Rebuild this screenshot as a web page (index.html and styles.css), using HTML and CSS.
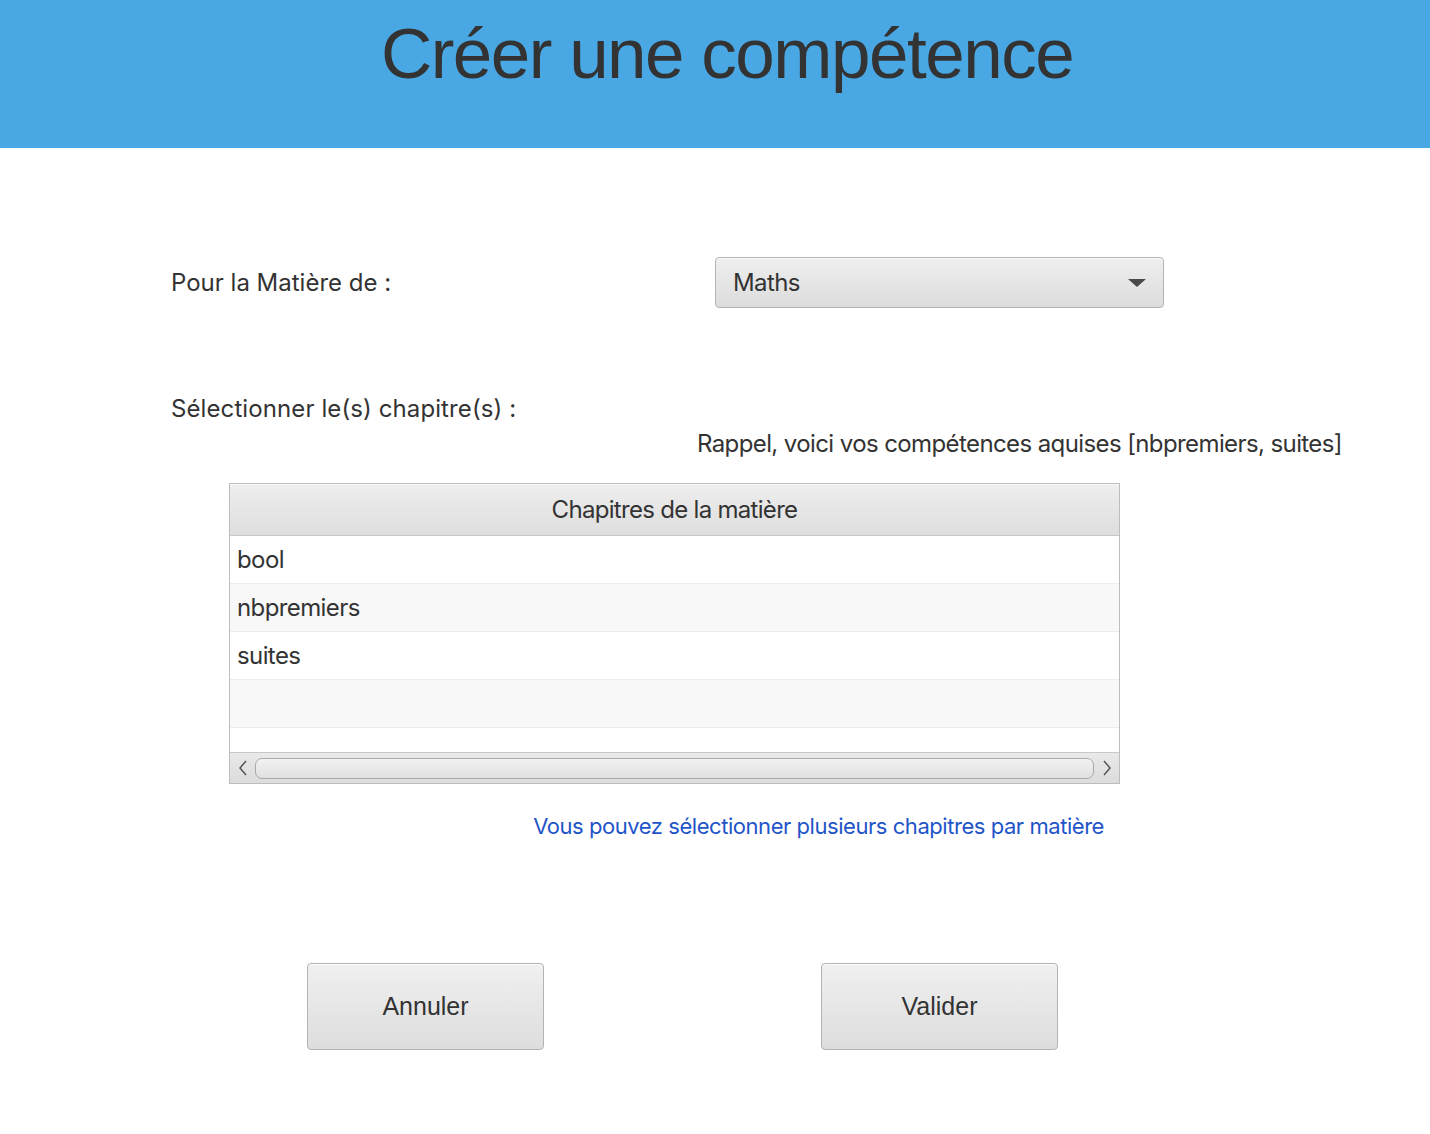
FILE: index.html
```html
<!DOCTYPE html>
<html lang="fr">
<head>
<meta charset="utf-8">
<link rel="stylesheet" href="styles.css">
</head>
<body>
<header class="banner"><h1 class="title">Créer une compétence</h1></header>
<main class="content">
  <div class="row-matiere">
    <span class="label">Pour la Matière de :</span>
    <div class="combo"><span class="combo-value">Maths</span><span class="combo-arrow"></span></div>
  </div>
  <div class="label label-chap">Sélectionner le(s) chapitre(s) :</div>
  <div class="rappel">Rappel, voici vos compétences aquises [nbpremiers, suites]</div>
  <div class="table">
    <div class="table-head">Chapitres de la matière</div>
    <div class="table-body">
      <div class="trow">bool</div>
      <div class="trow odd">nbpremiers</div>
      <div class="trow">suites</div>
      <div class="trow odd"></div>
      <div class="trow last"></div>
    </div>
    <div class="hscroll">
      <span class="sarrow left"><svg width="10" height="16" viewBox="0 0 10 16"><path d="M8 1 L2 8 L8 15" fill="none" stroke="#555" stroke-width="1.5"/></svg></span>
      <div class="sthumb"></div>
      <span class="sarrow right"><svg width="10" height="16" viewBox="0 0 10 16"><path d="M2 1 L8 8 L2 15" fill="none" stroke="#555" stroke-width="1.5"/></svg></span>
    </div>
  </div>
  <div class="note">Vous pouvez sélectionner plusieurs chapitres par matière</div>
  <div class="actions">
    <button class="btn">Annuler</button>
    <button class="btn">Valider</button>
  </div>
</main>
</body>
</html>
```
FILE: styles.css
```css
html, body { margin: 0; padding: 0; background: #fff; }
body { font-family: Inter, "Noto Sans", sans-serif; color: #333; width: 1430px; }
.banner { height: 148px; background: #49a7e4; display: flex; justify-content: center; padding-left: 24px; box-sizing: border-box; }
.title { margin: 0; padding-top: 12px; font-family: "Liberation Sans", Arial, sans-serif; font-weight: normal; font-size: 71px; line-height: 84px; color: #333; letter-spacing: -1.5px; }
.content { padding-left: 171px; }
.label { font-size: 24px; letter-spacing: 0; line-height: 30px; color: #333; }
.row-matiere { display: flex; align-items: center; margin-top: 109px; height: 51px; }
.row-matiere .label { width: 544px; }
.combo { border: 1px solid #b3b3b3; border-radius: 4px; background: linear-gradient(#efefef, #dcdcdc); box-shadow: inset 0 1px 0 #fbfbfb; display: flex; align-items: center; justify-content: space-between; padding: 0 17px; box-sizing: border-box; width: 449px; height: 51px; }
.combo-value { font-size: 24px; letter-spacing: -0.6px; color: #333; }
.combo-arrow { width: 0; height: 0; border-left: 9px solid transparent; border-right: 9px solid transparent; border-top: 8px solid #4a4a4a; }
.label-chap { margin-top: 86px; letter-spacing: 0.1px; }
.rappel { width: 1171px; text-align: right; font-size: 24px; letter-spacing: -0.6px; line-height: 30px; margin-top: 5px; }
.table { margin-left: 58px; margin-top: 24px; width: 891px; height: 301px; border: 1px solid #bdbdbd; box-sizing: border-box; display: flex; flex-direction: column; background: #fff; }
.table-head { height: 51px; border-bottom: 1px solid #c8c8c8; background: linear-gradient(#eeeeee, #dedede); box-shadow: inset 0 1px 0 #fafafa; display: flex; align-items: center; justify-content: center; font-size: 24px; letter-spacing: -0.7px; color: #333; flex: none; }
.table-body { flex: 1; overflow: hidden; }
.trow { height: 47px; border-bottom: 1px solid #ececec; background: #fff; display: flex; align-items: center; padding-left: 7px; font-size: 24px; letter-spacing: -0.6px; color: #333; }
.trow.odd { background: #f8f8f8; }
.trow.last { border-bottom: none; }
.hscroll { height: 30px; flex: none; border-top: 1px solid #c8c8c8; background: linear-gradient(#e9e9e9, #dcdcdc); display: flex; align-items: center; }
.sarrow { width: 25px; display: flex; justify-content: center; align-items: center; }
.sthumb { flex: 1; height: 19px; border: 1px solid #a9a9a9; border-radius: 7px; background: linear-gradient(#f2f2f2, #e0e0e0); }
.note { width: 933px; text-align: right; margin-top: 27px; font-size: 22px; letter-spacing: -0.45px; line-height: 30px; color: #1f55c8; }
.actions { display: flex; margin-top: 122px; margin-left: 136px; gap: 277px; }
.btn { width: 237px; height: 87px; border: 1px solid #b3b3b3; border-radius: 4px; background: linear-gradient(#f0f0f0, #dddddd); box-shadow: inset 0 1px 0 #fbfbfb; font-family: "Liberation Sans", Arial, sans-serif; font-size: 25px; color: #333; padding: 0; }
```
